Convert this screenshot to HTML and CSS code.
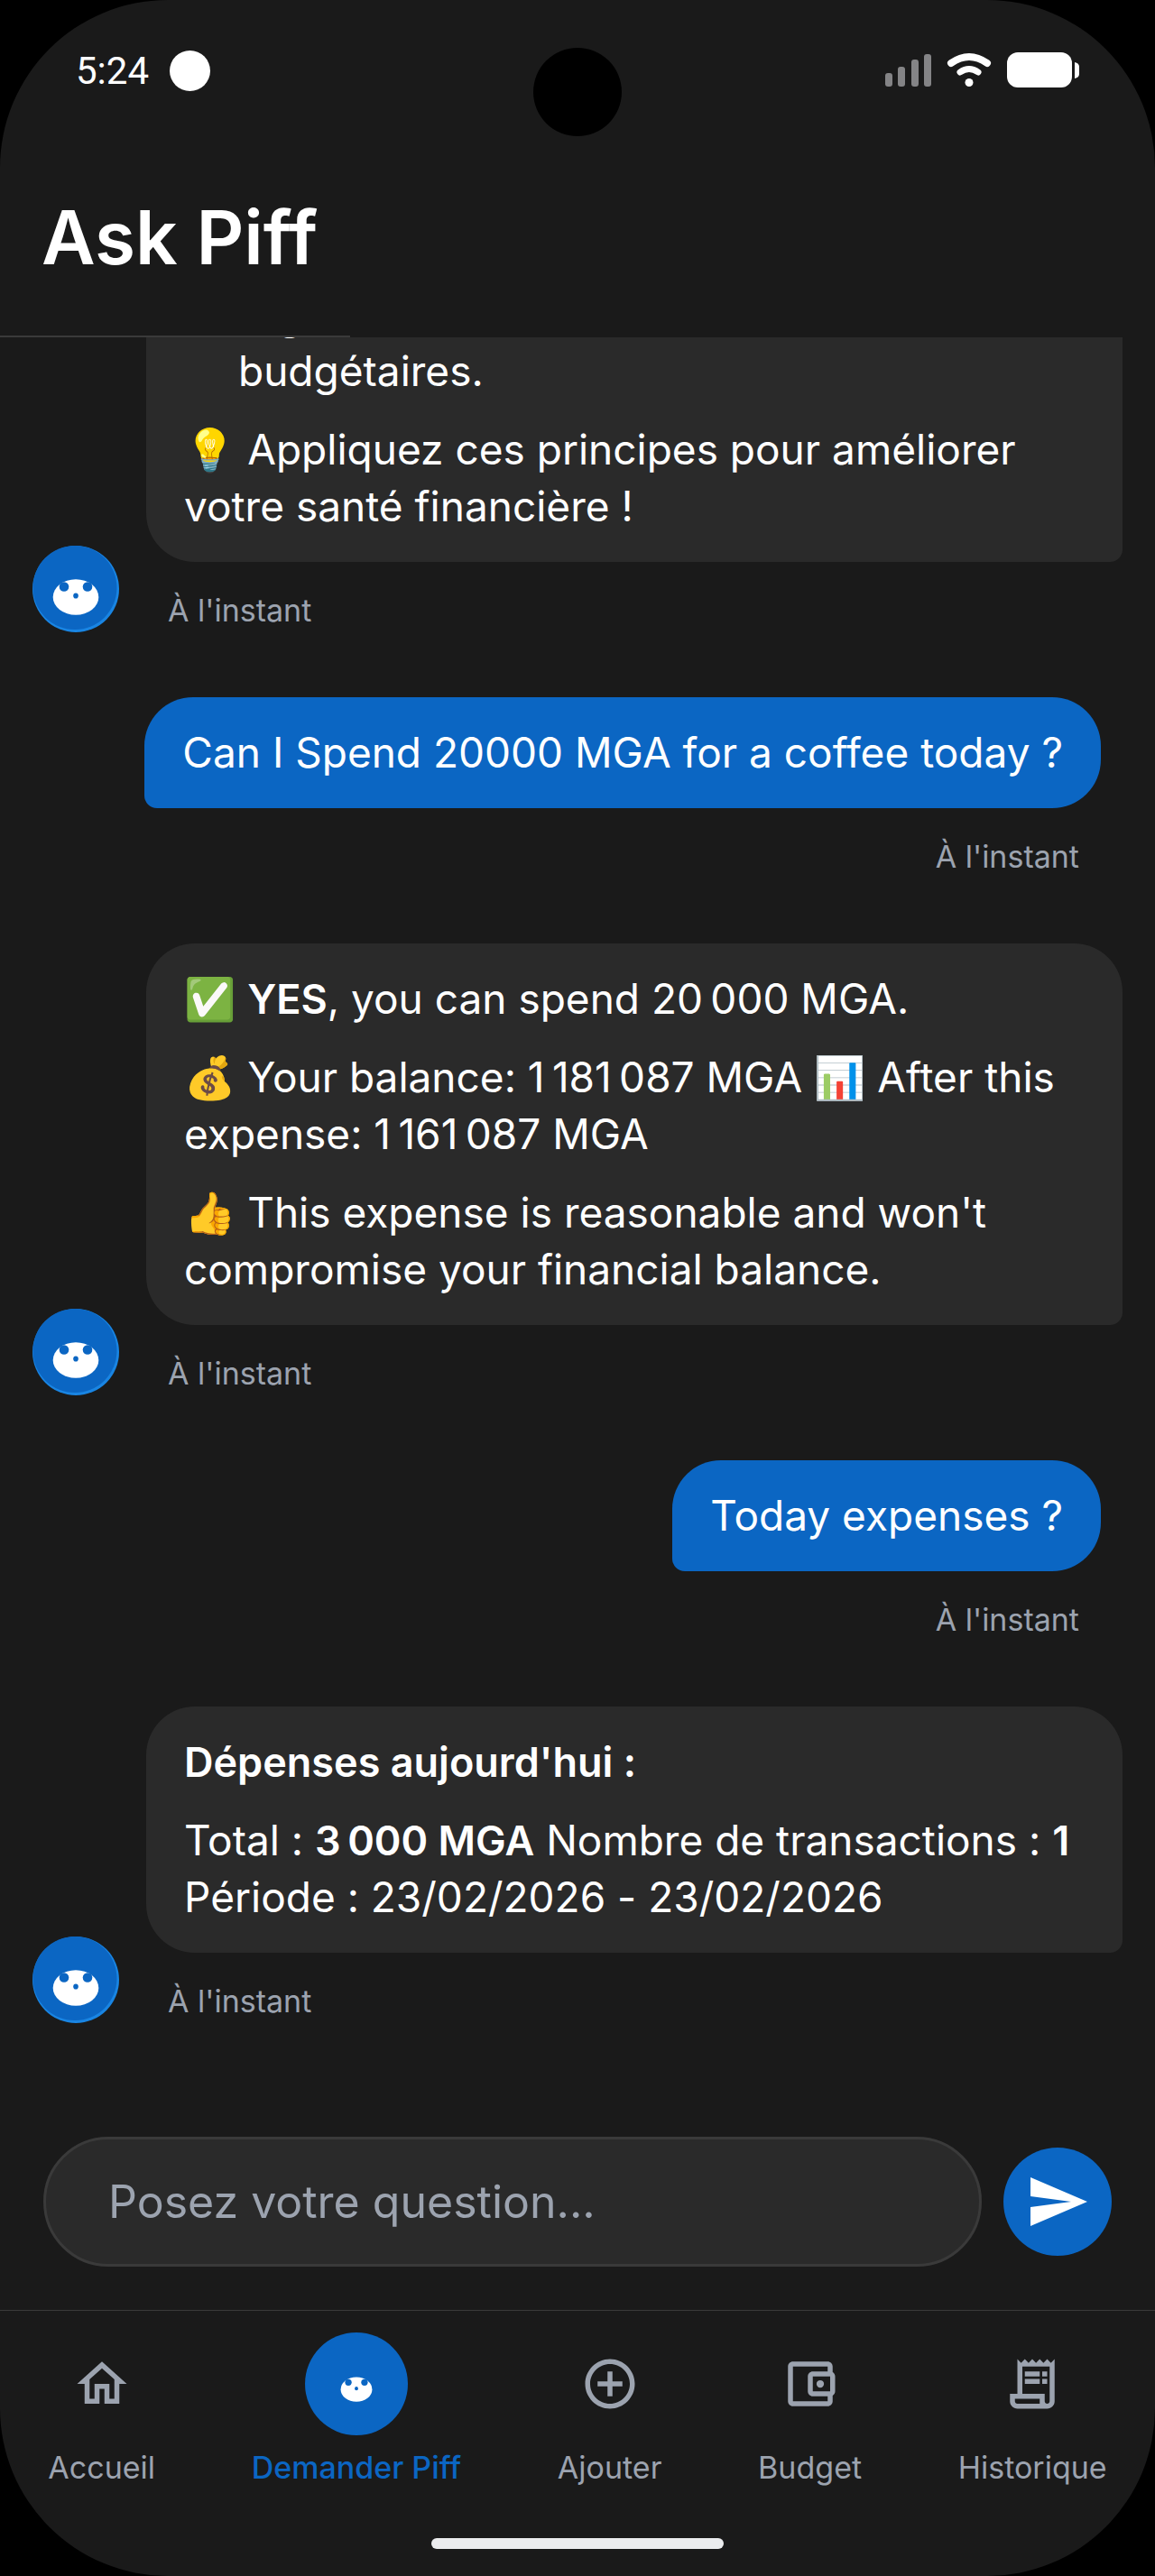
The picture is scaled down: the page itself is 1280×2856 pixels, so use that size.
FILE: index.html
```html
<!DOCTYPE html>
<html lang="fr">
<head>
<meta charset="utf-8">
<meta name="viewport" content="width=device-width, initial-scale=1">
<title>Ask Piff</title>
<link rel="stylesheet" href="styles.css">
</head>
<body>

<!-- mascot face, used by the avatars and the tab bar -->
<svg class="defs" aria-hidden="true">
  <symbol id="face" viewBox="0 0 96 96">
    <ellipse cx="48" cy="57" rx="25.3" ry="19.8" fill="#fff"/>
    <circle cx="35" cy="45.5" r="5.3" fill="#0b66c3"/>
    <circle cx="61" cy="45.5" r="5.3" fill="#0b66c3"/>
    <ellipse cx="48" cy="55.5" rx="2.8" ry="3.1" fill="#0b66c3"/>
  </symbol>
  <symbol id="avatar" viewBox="0 0 96 96">
    <circle cx="48" cy="48" r="48" fill="#1985e3"/>
    <circle cx="47" cy="46.5" r="46.5" fill="#0b66c3"/>
    <use href="#face" width="96" height="96"/>
  </symbol>
</svg>

<div class="phone">
  <div class="statusbar">
    <span class="clock">5:24</span>
    <span class="dot"></span>
    <span class="camera"></span>
    <svg class="signal" viewBox="0 0 216 48" aria-hidden="true">
      <g fill="#848486">
        <rect x="0" y="27" width="8" height="15" rx="3"/>
        <rect x="14" y="20" width="8" height="22" rx="3"/>
        <rect x="29" y="12" width="8" height="30" rx="3"/>
        <rect x="43" y="6" width="8" height="36" rx="3"/>
      </g>
      <g fill="none" stroke="#fff" stroke-linecap="round">
        <path d="M73 16Q93 2 113 16" stroke-width="8"/>
        <path d="M83 26Q93 19 103 26" stroke-width="7"/>
      </g>
      <circle cx="93" cy="37.5" r="4.5" fill="#fff"/>
      <rect x="135" y="4" width="72" height="39" rx="12" fill="#fff"/>
      <path d="M210 15Q215 16 215 20V28Q215 32 210 33Z" fill="#fff"/>
    </svg>
  </div>

  <header class="header">
    <h1>Ask Piff</h1>
  </header>
  <div class="progress"></div>

  <main class="chat">
    <div class="msg bot">
      <svg class="avatar"><use href="#avatar"/></svg>
      <div class="col">
        <div class="bubble">
          <ul><li>régulièrement vos limites<br>budgétaires.</li></ul>
          <p>💡 Appliquez ces principes pour améliorer votre santé financière !</p>
        </div>
        <time>À l'instant</time>
      </div>
    </div>

    <div class="msg user">
      <div class="bubble"><p>Can I Spend 20000 MGA for a coffee today ?</p></div>
      <time>À l'instant</time>
    </div>

    <div class="msg bot">
      <svg class="avatar"><use href="#avatar"/></svg>
      <div class="col">
        <div class="bubble">
          <p>✅ <b>YES</b>, you can spend 20&#8239;000 MGA.</p>
          <p>💰 Your balance: 1&#8239;181&#8239;087 MGA 📊 After this expense: 1&#8239;161&#8239;087 MGA</p>
          <p>👍 This expense is reasonable and won't compromise your financial balance.</p>
        </div>
        <time>À l'instant</time>
      </div>
    </div>

    <div class="msg user">
      <div class="bubble"><p>Today expenses ?</p></div>
      <time>À l'instant</time>
    </div>

    <div class="msg bot">
      <svg class="avatar"><use href="#avatar"/></svg>
      <div class="col">
        <div class="bubble">
          <p><b>Dépenses aujourd'hui :</b></p>
          <p>Total : <b>3&#8239;000 MGA</b> Nombre de transactions : <b>1</b><br>Période : 23/02/2026 - 23/02/2026</p>
        </div>
        <time>À l'instant</time>
      </div>
    </div>
  </main>

  <form class="composer">
    <input type="text" placeholder="Posez votre question..." aria-label="Posez votre question">
    <button type="button" class="send" aria-label="Envoyer">
      <svg viewBox="0 0 24 24"><path d="M2.01 21L23 12 2.01 3 2 10l15 2-15 2z"/></svg>
    </button>
  </form>

  <nav class="tabs">
    <a href="#">
      <span class="ico"><svg viewBox="0 0 24 24"><path d="M12 5.69l5 4.5V18h-2v-6H9v6H7v-7.81l5-4.5M12 3L2 12h3v8h6v-6h2v6h6v-8h3L12 3z"/></svg></span>
      Accueil
    </a>
    <a href="#" class="active">
      <span class="ico"><svg><use href="#face"/></svg></span>
      Demander Piff
    </a>
    <a href="#">
      <span class="ico"><svg viewBox="0 0 24 24"><path d="M13 7h-2v4H7v2h4v4h2v-4h4v-2h-4V7zm-1-5C6.48 2 2 6.48 2 12s4.48 10 10 10 10-4.48 10-10S17.52 2 12 2zm0 18c-4.41 0-8-3.59-8-8s3.59-8 8-8 8 3.59 8 8-3.59 8-8 8z"/></svg></span>
      Ajouter
    </a>
    <a href="#">
      <span class="ico"><svg viewBox="0 0 24 24"><path d="M21 7.28V5c0-1.1-.9-2-2-2H5c-1.11 0-2 .9-2 2v14c0 1.1.89 2 2 2h14c1.1 0 2-.9 2-2v-2.28c.59-.35 1-.98 1-1.72V9c0-.74-.41-1.37-1-1.72zM20 9v6h-7V9h7zM5 19V5h14v2h-6c-1.1 0-2 .9-2 2v6c0 1.1.9 2 2 2h6v2H5z"/><circle cx="16" cy="12" r="1.5"/></svg></span>
      Budget
    </a>
    <a href="#">
      <span class="ico"><svg viewBox="0 0 24 24"><path d="M19.5 3.5L18 2l-1.5 1.5L15 2l-1.5 1.5L12 2l-1.5 1.5L9 2 7.5 3.5 6 2v14H3v3c0 1.66 1.34 3 3 3h12c1.66 0 3-1.34 3-3V2l-1.5 1.5zM15 20H6c-.55 0-1-.45-1-1v-1h10v2zm4-1c0 .55-.45 1-1 1s-1-.45-1-1v-3H8V5h11v14z"/><path d="M9 7h6v2H9zM16 7h2v2h-2zM9 10h6v2H9zM16 10h2v2h-2z"/></svg></span>
      Historique
    </a>
  </nav>
  <div class="homebar"></div>
</div>

</body>
</html>
```
FILE: styles.css
```css
* {box-sizing: border-box;}
body {margin: 0; background: #000; color: #fff;
  font-family: Inter, "Noto Color Emoji", sans-serif;
  font-size: 46px; line-height: 63px;
  font-optical-sizing: none; font-variant-ligatures: none;}
.defs {position: absolute; width: 0; height: 0;}
.phone {position: relative; display: flex; flex-direction: column;
  height: 100vh; background: #1a1a1a;
  border-radius: 186px; overflow: hidden;}

/* status bar */
.statusbar {display: flex; align-items: center; flex: none;
  height: 156px; padding: 0 83px 0 84px;}
.clock {font-family: Roboto, sans-serif; font-size: 42px;}
.dot {width: 45px; height: 45px; margin-left: 23px;
  border-radius: 50%; background: #fff;}
.camera {position: absolute; top: 53px; left: 50%;
  width: 98px; height: 98px; margin-left: -49px;
  border-radius: 50%; background: #000;}
.signal {width: 216px; height: 48px; margin-left: auto;}

.header {flex: none; padding: 54px 46px;}
h1 {margin: 0; font-size: 82px; line-height: 108px; font-weight: 600;}
.progress {flex: none; width: 388px; height: 2px; background: #3a3a3a;}

/* messages */
.chat {flex: 1; min-height: 0; overflow: hidden;
  display: flex; flex-direction: column; justify-content: flex-end;
  gap: 72px; padding: 0 36px 72px;}
.msg {display: flex; flex: none;}
.bot {align-items: flex-end; gap: 30px;}
.user {flex-direction: column; align-items: flex-end; padding-right: 24px;}
.avatar {flex: none; width: 96px; height: 96px;}
.col {flex: 1; min-width: 0;}
.bubble {padding: 30px 42px; border-radius: 54px 54px 14px 54px;
  background: #2a2a2a;}
.user .bubble {background: #0b66c3; border-radius: 54px 54px 54px 14px;}
.bubble p, .bubble ul {margin: 0;}
.bubble ul {padding-left: 60px; list-style: none;}
.bubble p + p, .bubble ul + p {margin-top: 24px;}
b {font-size: 45px; font-weight: 600;}
time {display: block; margin: 34px 24px 4px;
  font-size: 34px; line-height: 40px; color: #9ca3af;}

/* input row */
.composer {display: flex; align-items: center; flex: none; gap: 24px;
  padding: 54px 48px 48px;}
.composer input {flex: 1; min-width: 0; height: 144px; padding: 0 69px;
  border: 3px solid #3a3a3a; border-radius: 72px; background: #2a2a2a;
  color: #fff; font: inherit; font-size: 50px; outline: none;
  font-optical-sizing: none;}
.composer input::placeholder {color: #9ca3af; opacity: 1;}
.send {display: flex; align-items: center; justify-content: center;
  width: 120px; height: 120px; padding: 0; border: 0;
  border-radius: 50%; background: #0b66c3; cursor: pointer;}
.send svg {width: 72px; height: 72px; fill: #fff;}

/* bottom tabs */
.tabs {display: flex; justify-content: space-around; flex: none;
  padding-top: 24px; border-top: 1px solid #3a3a3a;}
.tabs a {display: flex; flex-direction: column; align-items: center; gap: 16px;
  font-size: 34px; line-height: 40px; color: #9ca3af; text-decoration: none;}
.ico {display: flex; align-items: center; justify-content: center;
  width: 114px; height: 114px; border-radius: 50%;}
.ico svg {width: 66px; height: 66px; fill: currentColor;}
.tabs .active {color: #0b66c3; font-weight: 500;}
.active .ico {background: #0b66c3;}
.homebar {flex: none; align-self: center; width: 324px; height: 12px;
  margin: 58px 0 30px; border-radius: 6px; background: #ebecee;}
```
